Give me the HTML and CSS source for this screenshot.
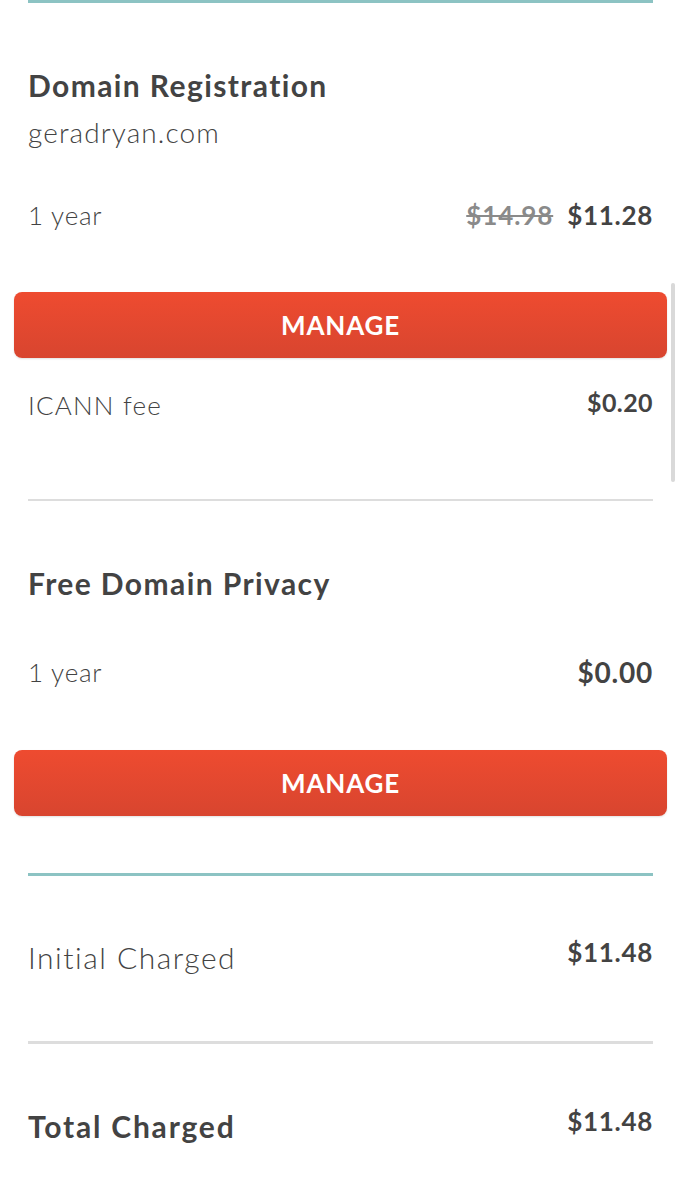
FILE: index.html
```html
<!DOCTYPE html>
<html lang="en">
<head>
<meta charset="utf-8">
<title>Order</title>
<link rel="stylesheet" href="styles.css">
</head>
<body>
<div class="page">
  <div class="rule rule-teal"></div>

  <section class="item item-first">
    <h2 class="item-title">Domain Registration</h2>
    <div class="item-sub">geradryan.com</div>
    <div class="row row-term">
      <span class="label">1 year</span>
      <span class="prices"><s class="old">$14.98</s><span class="price">$11.28</span></span>
    </div>
    <button class="manage manage-first">MANAGE</button>
    <div class="row row-fee">
      <span class="label label-fee">ICANN fee</span>
      <span class="price price-sm">$0.20</span>
    </div>
  </section>

  <div class="rule rule-gray rule-thin rule-after-fee"></div>

  <section class="item">
    <h2 class="item-title item-title-second">Free Domain Privacy</h2>
    <div class="row row-term row-term-second">
      <span class="label">1 year</span>
      <span class="price price-zero">$0.00</span>
    </div>
    <button class="manage manage-second">MANAGE</button>
  </section>

  <div class="rule rule-teal rule-summary"></div>

  <div class="row row-total row-initial">
    <span class="label label-lg">Initial Charged</span>
    <span class="price price-total">$11.48</span>
  </div>

  <div class="rule rule-gray rule-between"></div>

  <div class="row row-total row-grand">
    <span class="label label-lg label-bold">Total Charged</span>
    <span class="price price-total">$11.48</span>
  </div>

  <div class="scrollbar"></div>
</div>
</body>
</html>
```

FILE: styles.css
```css
* { box-sizing: border-box; }

html, body {
  margin: 0;
  padding: 0;
  background: #ffffff;
}

body {
  font-family: Lato, "Open Sans", "Liberation Sans", sans-serif;
  color: #434343;
}

.page {
  position: relative;
  width: 681px;
  height: 1200px;
  padding: 0 28px;
  overflow: hidden;
}

.rule { height: 3px; }
.rule-teal { background: #8cc3c3; }
.rule-gray { background: #dddddd; }
.rule-thin { height: 2px; }

.item-title {
  margin: 64px 0 0;
  font-size: 30px;
  line-height: 36px;
  font-weight: 700;
  letter-spacing: 1.4px;
  color: #434343;
}

.item-sub {
  margin-top: 11px;
  font-size: 28px;
  line-height: 36px;
  font-weight: 300;
  letter-spacing: 1.1px;
}

.row {
  display: flex;
  justify-content: space-between;
  align-items: center;
}

.label {
  font-size: 26px;
  line-height: 36px;
  font-weight: 300;
  letter-spacing: 0.8px;
}

.label-fee { letter-spacing: 1.2px; }

.row-term { margin-top: 47px; }
.row-term-second { margin-top: 53px; }

.prices {
  display: flex;
  align-items: center;
  gap: 14px;
}

.old {
  font-size: 26px;
  line-height: 36px;
  font-weight: 700;
  letter-spacing: 0.9px;
  color: #8a8a8a;
  text-decoration-thickness: 2px;
}

.price {
  font-size: 26px;
  line-height: 36px;
  font-weight: 700;
  letter-spacing: 0.7px;
  color: #434343;
}

.price-zero {
  font-size: 28px;
  letter-spacing: 0.8px;
}

.manage {
  display: block;
  width: calc(100% + 28px);
  height: 66px;
  margin: 0 -14px;
  border: none;
  border-radius: 8px;
  background: linear-gradient(#ee4b30, #d8452f);
  box-shadow: 0 1px 2px rgba(0, 0, 0, 0.12);
  color: #ffffff;
  font-family: inherit;
  font-size: 26px;
  font-weight: 700;
  letter-spacing: 0.8px;
  padding: 0;
}

.manage-first { margin-top: 59px; }
.manage-second { margin-top: 60px; }

.row-fee {
  margin-top: 29px;
  align-items: flex-start;
}

.price-sm {
  font-size: 25px;
  line-height: 30px;
  letter-spacing: 0.4px;
}

.rule-after-fee { margin-top: 76px; }

.item-title-second { margin-top: 64px; }

.rule-summary { margin-top: 57px; }

.row-total { align-items: flex-start; }

.row-total .label-lg {
  font-size: 30px;
  line-height: 40px;
  letter-spacing: 1.5px;
}

.row-total .label-bold {
  font-weight: 700;
  font-size: 30px;
  letter-spacing: 1.8px;
}

.price-total {
  font-size: 26px;
  line-height: 30px;
  letter-spacing: 0.7px;
}

.row-initial { margin-top: 61px; }
.rule-between { margin-top: 64px; }
.row-grand { margin-top: 62px; }

.scrollbar {
  position: absolute;
  left: 671px;
  top: 283px;
  width: 4px;
  height: 199px;
  border-radius: 2px;
  background: #d9d9d9;
}
```
